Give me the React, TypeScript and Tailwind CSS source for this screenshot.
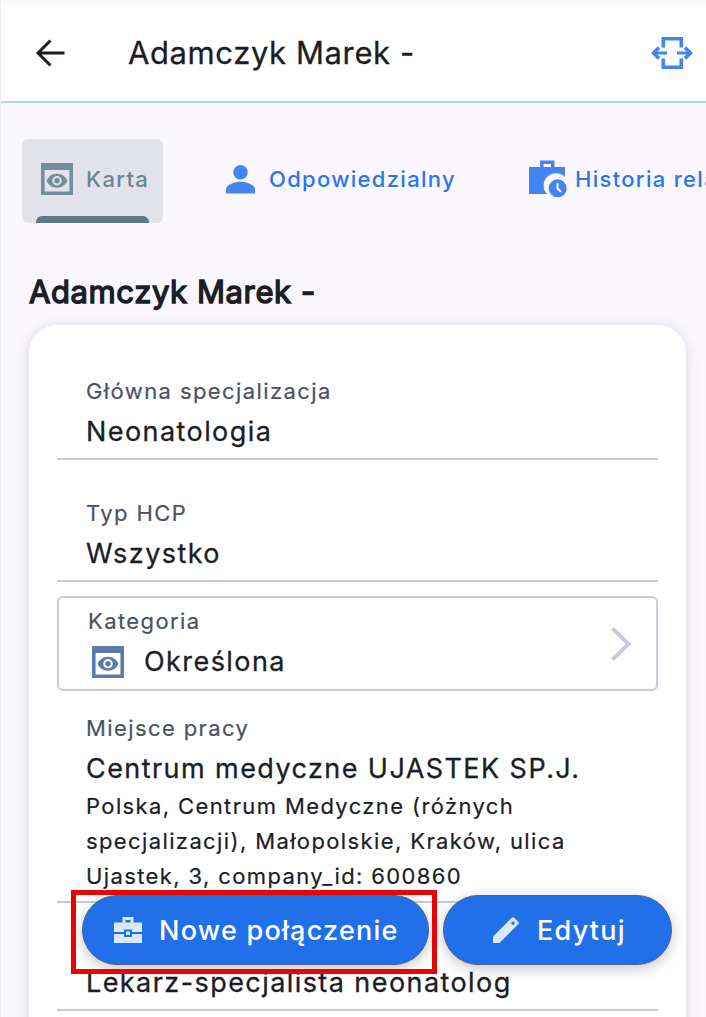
import type { ReactNode } from "react";

const ArrowBackIcon = () => (
  <svg width="30" height="28" viewBox="0 0 30 28" fill="none" stroke="#1b1d27" strokeWidth="3">
    <path d="M29.5 14H3.5M15.5 1.5L3 14l12.5 12.5" />
  </svg>
);

const ExpandIcon = () => (
  <svg width="42" height="34" viewBox="0 0 42 34" fill="none" stroke="#4285f0" strokeWidth="3.6">
    <path d="M12.3 11.5V2.8h18v8.7M12.3 22.5v8.7h18v-8.7" />
    <path d="M16 17H3M26 17h13" strokeWidth="3.2" />
    <path d="M8 11.5L2.6 17 8 22.5M34 11.5l5.4 5.5-5.4 5.5" />
  </svg>
);

const PreviewIcon = ({ color }: { color: string }) => (
  <svg width="32" height="32" viewBox="0 0 32 32" fill={color}>
    <path fillRule="evenodd" d="M0 0h32v32H0zM3.6 7v21.6h24.8V7z" />
    <path
      fillRule="evenodd"
      d="M16 10.8c4.8 0 8.8 2.8 10.5 7-1.7 4.2-5.7 7-10.5 7s-8.8-2.8-10.5-7c1.7-4.2 5.7-7 10.5-7zm0 2.3a4.7 4.7 0 100 9.4 4.7 4.7 0 000-9.4z"
    />
    <circle cx="16" cy="17.8" r="2.7" />
  </svg>
);

const PersonIcon = () => (
  <svg width="29" height="29" viewBox="0 0 29 29" fill="#4285f0">
    <circle cx="14.5" cy="7.3" r="7.2" />
    <path d="M0 28.5v-4.3c0-4.8 9.6-7.4 14.5-7.4S29 19.4 29 24.2v4.3z" />
  </svg>
);

const HistoryCaseIcon = () => (
  <svg width="38" height="38" viewBox="0 0 38 38" fill="#4285f0">
    <path fillRule="evenodd" d="M11 7V.5h14.5V7H36v10.1A11.300 11.300 0 0018 34H0V7zM14.500 7H22V4h-7.500z" />
    <path fillRule="evenodd" d="M28.700 19.300a9 9 0 110 18 9 9 0 010-18zm-1.200 4v5.600l3.800 3.700 1.400-1.400-3.200-3.200v-4.700z" />
  </svg>
);

const ToolboxIcon = () => (
  <svg width="28" height="26" viewBox="0 0 28 26" fill="#dce8fd">
    <path fillRule="evenodd" d="M8.500 5.500V0h11v5.500H28V15H18v-2.500h-8V15H0V5.500zM11.500 5.500h5V3h-5z" />
    <path d="M0 17h10v3h8v-3h10v9H0z" />
    <path d="M12 14.500h4v3.500h-4z" />
  </svg>
);

const PencilIcon = () => (
  <svg width="26" height="26" viewBox="0 0 26 26" fill="#dce8fd">
    <path
      fillRule="evenodd"
      d="M0 26v-6.500L18.700.8q1.300-1.300 2.600 0l3.900 3.900q1.300 1.300 0 2.600L6.500 26zM20 4.500a1.700 1.700 0 100 3.400 1.700 1.700 0 000-3.400z"
    />
  </svg>
);

const Label = ({ children }: { children: ReactNode }) => (
  <div className="text-[22px] leading-[30px] tracking-[1.4px] text-[#4d5263] [-webkit-text-stroke:0.2px_#4d5263]">
    {children}
  </div>
);

const Value = ({ children }: { children: ReactNode }) => (
  <div className="text-[27px] leading-[40px] tracking-[1.43px] text-[#1b1d27] [-webkit-text-stroke:0.3px_#1b1d27]">
    {children}
  </div>
);

const Field = ({ label, value }: { label: string; value: string }) => (
  <div className="flex flex-col gap-1.5 border-b-2 border-[#c8cbdf] pb-1.5 pl-[29px]">
    <Label>{label}</Label>
    <Value>{value}</Value>
  </div>
);

export default function App() {
  return (
    <div className="relative h-[1017px] w-[706px] overflow-hidden border-l border-[#eeedf5] bg-[#faf7fe] font-['Inter',sans-serif] whitespace-nowrap">
      <header className="mt-[5px] flex h-[98px] items-center border-b-2 border-[#bcd1fa] bg-white pr-[13px] pl-[34px]">
        <ArrowBackIcon />
        <h1 className="ml-[63px] grow text-[31px] leading-10 tracking-[0.6px] text-[#1b1d27] [-webkit-text-stroke:0.3px_#1b1d27]">
          Adamczyk Marek -
        </h1>
        <ExpandIcon />
      </header>

      <nav className="mt-9 flex h-[84px] items-center pl-[21px] text-[22px] font-medium tracking-[1.3px] text-[#2b76ec]">
        <div className="relative flex h-full w-[141px] shrink-0 items-center gap-[13px] rounded-md bg-[#e1e2eb] pb-1 pl-[19px] text-[#6c8391]">
          <PreviewIcon color="#768d9b" />
          <span>Karta</span>
          <div className="absolute bottom-0 left-[14px] h-[7px] w-[113px] rounded-t-md bg-[#607887]" />
        </div>
        <div className="ml-[63px] flex w-[303px] shrink-0 items-center gap-[14px] pb-1">
          <PersonIcon />
          <span>Odpowiedzialny</span>
        </div>
        <div className="flex shrink-0 items-center gap-2 pb-1">
          <HistoryCaseIcon />
          <span>Historia relacji</span>
        </div>
      </nav>

      <h2 className="mt-[49px] ml-7 text-[31px] leading-10 tracking-[0.6px] text-[#1b1d27] [-webkit-text-stroke:1.4px_#1b1d27]">
        Adamczyk Marek -
      </h2>

      <main className="mt-[13px] ml-7 h-[740px] w-[657px] rounded-[28px] bg-white px-7 pt-[51px] shadow-[0_2px_14px_rgba(40,40,80,0.16)]">
        <Field label="Główna specjalizacja" value="Neonatologia" />
        <div className="mt-[38px]">
          <Field label="Typ HCP" value="Wszystko" />
        </div>

        <div className="mt-[14px] flex h-[95px] items-center justify-between rounded-md border-2 border-[#c8cbdf] pr-6 pl-[29px]">
          <div className="flex flex-col gap-[5px] pt-px">
            <Label>Kategoria</Label>
            <div className="flex items-center gap-5 pl-1">
              <PreviewIcon color="#6079ab" />
              <div className="pt-px">
                <Value>Określona</Value>
              </div>
            </div>
          </div>
          <svg width="21" height="34" viewBox="0 0 21 34" fill="none" stroke="#c8cbdc" strokeWidth="4">
            <path d="M1.5 1.5L17.5 17l-16 15.5" />
          </svg>
        </div>

        <div className="mt-[22px] border-b-2 border-[#c8cbdf] pb-[7px] pl-[29px]">
          <Label>Miejsce pracy</Label>
          <div className="mt-1.5">
            <Value>Centrum medyczne UJASTEK SP.J.</Value>
          </div>
          <p className="text-[22px] leading-[35px] tracking-[1.38px] text-[#1b1d27] [-webkit-text-stroke:0.2px_#1b1d27]">
            Polska, Centrum Medyczne (różnych
            <br />
            specjalizacji), Małopolskie, Kraków, ulica
            <br />
            Ujastek, 3, company_id: 600860
          </p>
        </div>

        <div className="mt-[60px] border-b-2 border-[#c8cbdf] pb-1.5 pl-[29px]">
          <Value>Lekarz-specjalista neonatolog</Value>
        </div>
      </main>

      {/* floating actions */}
      <div className="absolute top-[895px] left-[81px] flex gap-[14px] text-[27px] font-medium tracking-[1.25px] text-white">
        <button className="flex h-[70px] w-[347px] items-center gap-[17px] rounded-full border border-[#4a6190] bg-[#216fe9] pl-[31px] shadow-[0_4px_14px_rgba(0,0,0,0.22)]">
          <ToolboxIcon />
          <span className="pt-0.5">Nowe połączenie</span>
        </button>
        <button className="flex h-[70px] w-[229px] items-center gap-[18px] rounded-full border border-[#4a6190] bg-[#216fe9] pl-[49px] shadow-[0_4px_14px_rgba(0,0,0,0.22)]">
          <PencilIcon />
          <span className="pt-0.5">Edytuj</span>
        </button>
      </div>
      <div className="absolute top-[890px] left-[70px] h-[84px] w-[366px] border-5 border-[#e80505]" />
    </div>
  );
}
